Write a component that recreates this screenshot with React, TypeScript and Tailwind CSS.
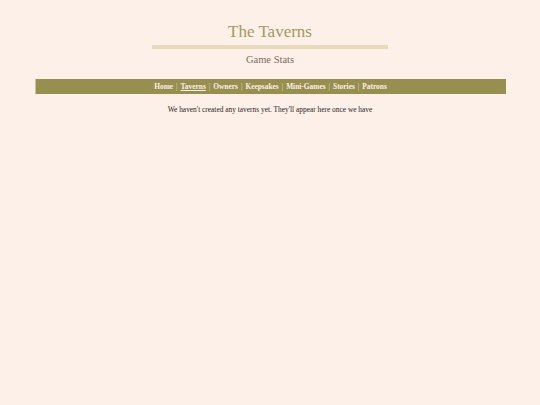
export default function App() {
  const links = ["Home", "Taverns", "Owners", "Keepsakes", "Mini-Games", "Stories", "Patrons"];
  return (
    <div className="min-h-[405px] w-full bg-[#fdf0e8] font-['Liberation_Serif',serif]">
      <div className="flex flex-col items-center pt-[22px]">
        <h1 className="text-[17px] leading-[20px] text-[#a39a5e]">The Taverns</h1>
        <div className="mt-[3px] h-[4px] w-[236px] bg-[#e8dbbd]" />
        <div className="mt-[5px] text-[10.5px] leading-[12px] text-[#7f6b60]">Game Stats</div>
      </div>
      <nav className="mx-auto mt-[13px] flex h-[15px] w-[471px] items-center justify-center border-l border-[#c9c29a] bg-[#968f4f] text-[7.4px] font-bold text-[#fdf0e8]">
        {links.map((l, i) => (
          <span key={l} className="flex items-center">
            <span className={l === "Taverns" ? "underline" : ""}>{l}</span>
            {i < links.length - 1 && <span className="px-[3px] font-normal text-[#e6dfc0]">|</span>}
          </span>
        ))}
      </nav>
      <p className="mt-[11px] text-center text-[7.4px] leading-[10px] text-[#2b2420]">
        We haven't created any taverns yet. They'll appear here once we have
      </p>
    </div>
  );
}
